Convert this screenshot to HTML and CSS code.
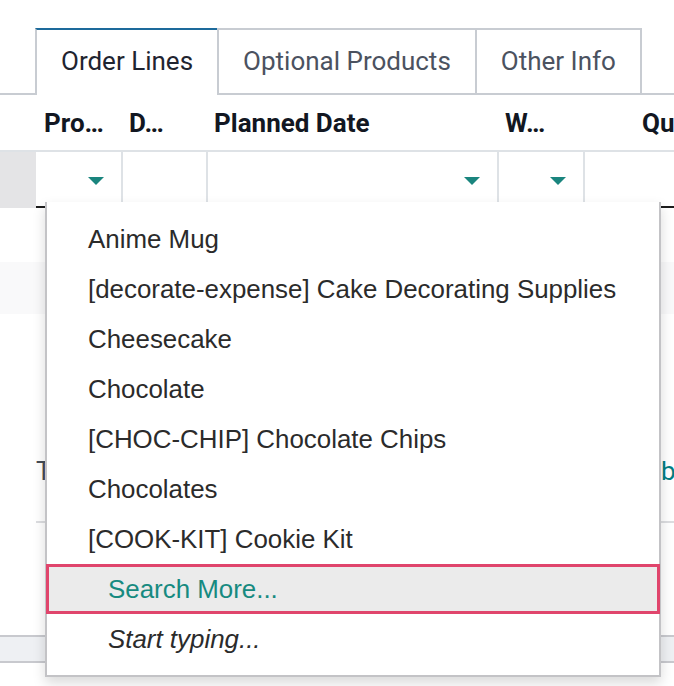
FILE: index.html
```html
<!DOCTYPE html>
<html>
<head>
<meta charset="utf-8">
<link rel="stylesheet" href="styles.css">
</head>
<body>
<div class="page">
  <div class="tabs">
    <div class="tab active">Order Lines</div>
    <div class="tab">Optional Products</div>
    <div class="tab">Other Info</div>
  </div>
  <div class="grid head">
    <div class="c"></div>
    <div class="c h">Pro…</div>
    <div class="c h">D…</div>
    <div class="c h">Planned Date</div>
    <div class="c h">W…</div>
    <div class="c h last">Qu</div>
  </div>
  <div class="grid row">
    <div class="c handle"></div>
    <div class="c cell"><span class="caret"></span></div>
    <div class="c cell"></div>
    <div class="c cell"><span class="caret"></span></div>
    <div class="c cell"><span class="caret"></span></div>
    <div class="c cell noline"></div>
  </div>
  <div class="gap"></div>
  <div class="stripe"></div>
  <div class="terms">
    <span class="terms-label">T</span>
    <span class="terms-link">b</span>
  </div>
  <div class="gap2"></div>
  <div class="band"></div>

  <div class="dropdown">
    <div class="item">Anime Mug</div>
    <div class="item">[decorate-expense] Cake Decorating Supplies</div>
    <div class="item">Cheesecake</div>
    <div class="item">Chocolate</div>
    <div class="item">[CHOC-CHIP] Chocolate Chips</div>
    <div class="item">Chocolates</div>
    <div class="item">[COOK-KIT] Cookie Kit</div>
    <div class="item more">Search More...</div>
    <div class="item typing">Start typing...</div>
  </div>
</div>
</body>
</html>
```
FILE: styles.css
```css
html, body {
  margin: 0;
  padding: 0;
  background: #ffffff;
  overflow: hidden;
}
.page {
  position: relative;
  width: 674px;
  height: 686px;
  font-family: Roboto, "Liberation Sans", sans-serif;
  overflow: hidden;
}
.tabs {
  display: flex;
  padding: 28px 0 0 35px;
  border-bottom: 2px solid #c8ccd2;
  height: 65px;
  box-sizing: content-box;
}
.tab {
  display: flex;
  align-items: center;
  padding: 0 24px 1px;
  border: 2px solid #c8ccd2;
  border-bottom: none;
  margin-right: -2px;
  font-size: 26px;
  color: #4b5260;
  background: #fff;
  white-space: nowrap;
  height: 65px;
  box-sizing: border-box;
}
.tab.active {
  border-top-color: #1d6a9b;
  color: #1f2430;
  margin-bottom: -2px;
  height: 67px;
  padding-bottom: 3px;
}
.grid {
  display: grid;
  grid-template-columns: 36px 86px 85px 291px 86px 1fr;
}
.head {
  height: 55px;
  border-bottom: 2px solid #dee2e6;
}
.h {
  display: flex;
  align-items: center;
  padding-left: 7px;
  font-size: 26px;
  font-weight: 700;
  color: #121722;
  white-space: nowrap;
  overflow: hidden;
}
.head .c:nth-child(2) { padding-left: 8px; }
.h.last { padding-left: 58px; }
.row {
  height: 56px;
}
.handle {
  background: #e4e4e6;
}
.cell {
  display: flex;
  align-items: center;
  justify-content: flex-end;
  padding-right: 17px;
  border-right: 2px solid #dee2e6;
  border-bottom: 2px solid #1c1c1c;
  margin-right: -1px;
  padding-top: 4px;
  box-sizing: border-box;
}
.cell.noline { border-right: none; }
.caret {
  width: 0;
  height: 0;
  border-left: 8px solid transparent;
  border-right: 8px solid transparent;
  border-top: 8px solid #1a857e;
}
.gap { height: 54px; }
.stripe { height: 52px; background: #f9f9fa; }
.terms {
  display: flex;
  height: 209px;
  box-sizing: border-box;
  padding-top: 142px;
  margin-left: 36px;
  border-bottom: 2px solid #dcdde0;
  font-size: 26px;
  line-height: 30px;
  white-space: nowrap;
}
.terms-label {
  width: 625px;
  flex: none;
  color: #444b55;
}
.terms-link { color: #017e84; }
.gap2 { height: 112px; }
.band {
  height: 24px;
  background: #eef0f3;
  border-top: 2px solid #c8c9ce;
  border-bottom: 2px solid #c8c9ce;
}
.dropdown {
  position: absolute;
  left: 45px;
  top: 202px;
  width: 616px;
  box-sizing: border-box;
  padding: 12px 0 11px;
  background: #ffffff;
  border: 2px solid #c3c3c6;
  border-top: none;
  box-shadow: 0 6px 12px rgba(0, 0, 0, 0.15);
  font-family: "Liberation Sans", Arial, sans-serif;
  font-size: 25.9px;
  color: #2b2b2b;
}
.item {
  height: 50px;
  line-height: 50px;
  padding-left: 41px;
  white-space: nowrap;
  box-sizing: border-box;
}
.item.more {
  padding-left: 59px;
  line-height: 44px;
  color: #178a80;
  background: #ebebeb;
  border: 3px solid #e0456c;
  margin: 0 -1px;
}
.item.typing {
  padding-left: 61px;
  font-style: italic;
  color: #2b2b2b;
}
```
